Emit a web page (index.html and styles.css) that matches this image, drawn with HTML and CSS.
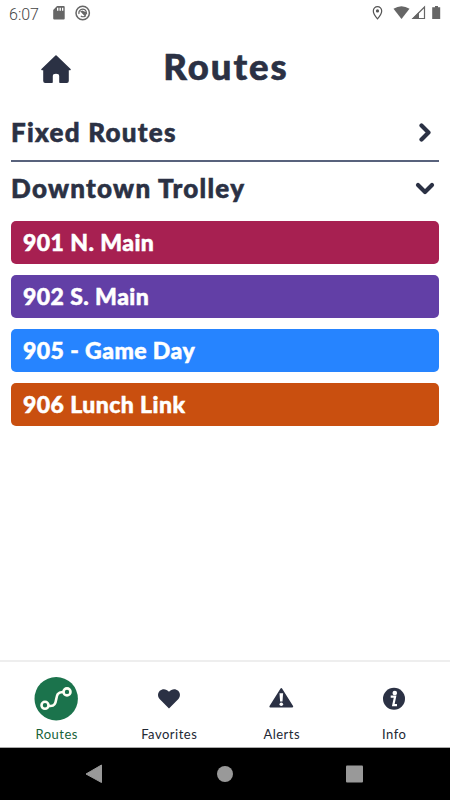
FILE: index.html
```html
<!DOCTYPE html>
<html lang="en">
<head>
<meta charset="utf-8">
<title>Routes</title>
<link rel="stylesheet" href="styles.css">
</head>
<body>
<div class="status">
  <span class="time">6:07</span>
  <svg class="sd" width="12" height="14" viewBox="0 0 12 14"><path fill="#666" fill-rule="evenodd" d="M4 0h6.700q1 0 1 1v11.500q0 1-1 1H1.200q-1 0-1-1V4zM4 1.700v3h1.400v-3zM6.500 1.700v3h1.400v-3zM9 1.700v3h1.300v-3z"/></svg>
  <svg class="sync" width="16" height="16" viewBox="0 0 16 16"><circle cx="7.700" cy="8" r="6.700" fill="none" stroke="#666" stroke-width="1.500"/><path d="M4 9A4 4 0 0 1 10 4.700Q11.500 6 11.500 8.500L8.800 6.800 7.800 8 10.500 11Q8 12.500 5.800 11" fill="none" stroke="#666" stroke-width="1.200"/><path d="M5 6.500 7.500 5.500 11.500 9 10.500 10.800z" fill="#666"/></svg>
  <svg class="signals" width="72" height="16" viewBox="0 0 72 16"><path d="M6.500 1.700a4.200 4.200 0 0 1 4.200 4.200c0 3-4.200 7.900-4.200 7.900S2.300 8.900 2.300 5.900a4.200 4.200 0 0 1 4.200-4.200z" fill="none" stroke="#555" stroke-width="1.200"/><circle cx="6.500" cy="5.900" r="1.600" fill="#555"/><path d="M22.500 3.800q8-5.200 16 0L30.500 14z" fill="#666"/><path d="M42 13.500 53.500 2v11.500z" fill="none" stroke="#666" stroke-width="1.200"/><path d="M41 14 48 7v7z" fill="#666"/><path d="M64 1h3v1.300h2.200V14h-8V2.300H64z" fill="#666"/></svg>
</div>
<header class="header">
  <svg class="home" width="32" height="30" viewBox="0 0 32 30"><path d="M16 2 30 15.500H28V27q0 1.200-1.200 1.200H20V22q0-3-4-3t-4 3v6.200H5.200Q4 28.200 4 27V15.500H2z" fill="#2b3144" stroke="#2b3144" stroke-width="1.600" stroke-linejoin="round"/></svg>
  <h1>Routes</h1>
</header>
<main>
  <section class="group divided"><h2>Fixed Routes</h2><svg width="20" height="20" viewBox="0 0 20 20"><path d="M6.500 3.500 13.500 10.500 6.500 17.500"/></svg></section>
  <section class="group"><h2>Downtown Trolley</h2><svg width="20" height="20" viewBox="0 0 20 20"><path d="M3 7 10 14 17 7"/></svg></section>
  <div class="list">
    <a class="route r901">901 N. Main</a>
    <a class="route r902">902 S. Main</a>
    <a class="route r905">905 - Game Day</a>
    <a class="route r906">906 Lunch Link</a>
  </div>
</main>
<nav class="tabs">
  <a class="tab active"><svg width="44" height="44" viewBox="0 0 44 44"><circle cx="22.200" cy="21.700" r="21.700" fill="#1b734c"/><g fill="none" stroke="#fffff4" stroke-width="2.600"><circle cx="11" cy="28.300" r="3.500"/><circle cx="33" cy="14.900" r="3.500"/><path d="M14.700 28.900C27 30.700 17.500 14.200 29.300 15"/></g></svg><span>Routes</span></a>
  <a class="tab"><svg width="44" height="44" viewBox="0 0 44 44"><path d="M22 31.500 12.600 22C10.500 19.700 10.500 16 12.800 13.800 15.500 11.400 19.500 11.800 22 14.800 24.500 11.800 28.500 11.400 31.200 13.800 33.500 16 33.500 19.700 31.400 22z" fill="#2b3144"/></svg><span>Favorites</span></a>
  <a class="tab"><svg width="44" height="44" viewBox="0 0 44 44"><path d="M22.300 12 33.300 29.500H11.300z" fill="#2b3144" stroke="#2b3144" stroke-width="1.800" stroke-linejoin="round"/><path d="M20.500 16.300h3.600l-.6 8.200h-2.400z" fill="#fff"/><circle cx="22.300" cy="27.200" r="1.800" fill="#fff"/></svg><span>Alerts</span></a>
  <a class="tab"><svg width="44" height="44" viewBox="0 0 44 44"><circle cx="22" cy="21.700" r="11" fill="#2b3144"/><circle cx="22.800" cy="16" r="2.300" fill="#fff"/><path d="M18.700 19.700H23.100L21.300 28.100H25" fill="none" stroke="#fff" stroke-width="2.200"/></svg><span>Info</span></a>
</nav>
<div class="system">
  <svg width="450" height="52" viewBox="0 0 450 52"><g fill="#999"><path d="M86 26 101.500 17v17.500z" stroke="#999" stroke-linejoin="round"/><circle cx="225" cy="26" r="8"/><rect x="346" y="17.500" width="17" height="17" rx="1"/></g></svg>
</div>
</body>
</html>
```
FILE: styles.css
```css
* { box-sizing: border-box; }
body { margin: 0; width: 450px; height: 800px; background: #fff; color: #2b3144; font-family: Lato, sans-serif; display: flex; flex-direction: column; overflow: hidden; }
h1, h2 { margin: 0; font-weight: 900; white-space: nowrap; -webkit-text-stroke: .6px currentColor; }
svg { display: block; flex: none; }
.status { height: 28px; display: flex; align-items: center; padding: 0 7px 2px 9px; }
.time { font: 300 16px/20px Roboto, sans-serif; color: #444; width: 44px; padding-top: 3px; }
.sync { margin-left: 10px; }
.signals { margin-left: auto; }
.header { height: 84px; display: grid; grid-template-columns: 112px 228px 110px; justify-items: center; align-items: center; padding-bottom: 5px; }
.home { margin-top: 2px; }
h1 { font-size: 36.500px; line-height: 44px; letter-spacing: 2px; margin-top: -4px; }
main { flex: 1; padding: 0 11px; }
.group { height: 56px; display: flex; align-items: center; justify-content: space-between; padding: 0 4px 10px 0; }
.group.divided { height: 50px; padding-bottom: 8px; border-bottom: 2px solid #58627c; margin-bottom: 3px; }
.group svg { fill: none; stroke: #2b3144; stroke-width: 4.200; stroke-linecap: round; stroke-linejoin: round; }
h2 { font-size: 26px; line-height: 32px; letter-spacing: 1.270px; }
.list { display: flex; flex-direction: column; gap: 11px; }
.route { height: 43px; border-radius: 5px; padding-left: 12px; color: #fff; font-size: 23px; font-weight: 900; line-height: 42px; letter-spacing: .43px; -webkit-text-stroke: .5px #fff; }
.r901 { background: #a72051; }
.r902 { background: #623fa6; }
.r905 { background: #2684ff; }
.r906 { background: #c94f0f; }
.tabs { height: 88px; border-top: 2px solid #eee; border-bottom: 1px solid #aaa; display: grid; grid-template-columns: repeat(4, 1fr); }
.tab { display: flex; flex-direction: column; align-items: center; padding-top: 15px; color: #222733; font-size: 13px; line-height: 16px; letter-spacing: .5px; }
.tab span { margin: 5px 0 0 1px; }
.active { color: #176239; }
.system { height: 52px; background: #000; }
```
